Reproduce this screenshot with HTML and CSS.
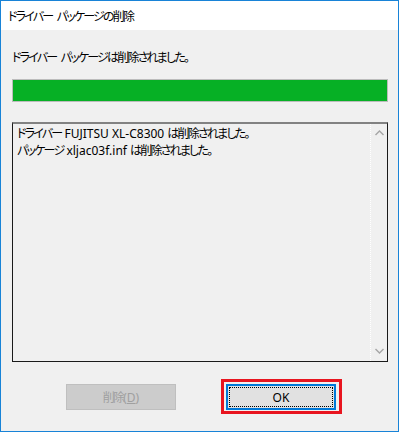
FILE: index.html
```html
<!DOCTYPE html>
<html lang="ja">
<head>
<meta charset="utf-8">
<link rel="stylesheet" href="styles.css">
</head>
<body>
<div class="window">
  <div class="titlebar"><span class="jp">ドライバー パッケージの削除</span></div>
  <div class="content">
    <div class="status"><span class="jp">ドライバー パッケージは削除されました。</span></div>
    <div class="progress"><div class="fill" style="width:100%"></div></div>
    <div class="listbox">
      <div class="lines">
        <div class="line"><span class="jp">ドライバー</span> FUJITSU XL-C8300 <span class="jp">は削除されました。</span></div>
        <div class="line"><span class="jp">パッケージ</span> xljac03f.inf <span class="jp">は削除されました。</span></div>
      </div>
      <div class="scrollbar">
        <svg class="arrow" width="9" height="6" viewBox="0 0 9 6"><path d="M0.5 5 L4.5 1 L8.5 5" fill="none" stroke="#a6a6a6" stroke-width="1.4"/></svg>
        <svg class="arrow" width="9" height="6" viewBox="0 0 9 6"><path d="M0.5 1 L4.5 5 L8.5 1" fill="none" stroke="#a6a6a6" stroke-width="1.4"/></svg>
      </div>
    </div>
    <div class="buttons">
      <button class="btn disabled"><span class="jp">削除</span>(<u>D</u>)</button>
      <span class="highlight"><button class="btn default"><span class="focus">OK</span></button></span>
    </div>
  </div>
</div>
</body>
</html>
```
FILE: styles.css
```css
html, body {
  margin: 0;
  padding: 0;
  background: #f0f0f0;
}
body {
  font-family: "Noto Sans", "Noto Sans CJK JP", sans-serif;
  font-size: 12px;
  font-feature-settings: "palt";
  color: #000;
}
.jp {
  letter-spacing: -1.8px;
  word-spacing: 3px;
}
.window {
  width: 399px;
  height: 432px;
  box-sizing: border-box;
  border: 1px solid #1883d7;
  background: #f0f0f0;
  display: flex;
  flex-direction: column;
}
.titlebar {
  height: 29px;
  box-sizing: border-box;
  background: #fff;
  padding: 2px 0 0 7px;
  line-height: 27px;
  font-size: 12px;
}
.content {
  padding: 0 10px 0 11px;
  display: flex;
  flex-direction: column;
}
.status {
  margin-top: 20px;
  line-height: 16px;
  height: 16px;
}
.progress {
  margin-top: 13px;
  height: 23px;
  box-sizing: border-box;
  border: 1px solid #bcbcbc;
  background: #e6e6e6;
}
.fill {
  height: 100%;
  background: #06b025;
}
.listbox {
  margin-top: 20px;
  height: 240px;
  box-sizing: border-box;
  border-top: 2px solid #828282;
  border-left: 1px solid #1a1a1a;
  border-right: 1px solid #1a1a1a;
  border-bottom: 1px solid #1a1a1a;
  display: flex;
}
.lines {
  flex: 1;
  padding: 1px 0 0 4px;
}
.line {
  line-height: 17px;
  white-space: nowrap;
}
.scrollbar {
  width: 16px;
  border-left: 1px dotted #ffffff;
  display: flex;
  flex-direction: column;
  justify-content: space-between;
  align-items: center;
  padding: 6px 0 7px;
}
.arrow {
  display: block;
}
.buttons {
  margin-top: 22px;
  display: flex;
  padding-left: 54px;
  gap: 50px;
}
.btn {
  width: 110px;
  height: 26px;
  box-sizing: border-box;
  font-family: "Noto Sans", "Noto Sans CJK JP", sans-serif;
  font-size: 12px;
  font-feature-settings: "palt";
  padding: 0;
  margin: 0;
}
.disabled {
  background: #cccccc;
  border: 1px solid #bfbfbf;
  color: #a0a0a0;
}
.default {
  background: #e1e1e1;
  border: 2px solid #0078d7;
  color: #000;
  display: flex;
  padding: 1px;
}
.focus {
  flex: 1;
  border: 1px dotted #000;
  display: flex;
  align-items: center;
  justify-content: center;
}
.highlight {
  position: relative;
  display: block;
}
.highlight::after {
  content: "";
  position: absolute;
  left: -5px;
  top: -5px;
  right: -6px;
  bottom: -4px;
  border: 3px solid #e8151f;
  pointer-events: none;
}
```
